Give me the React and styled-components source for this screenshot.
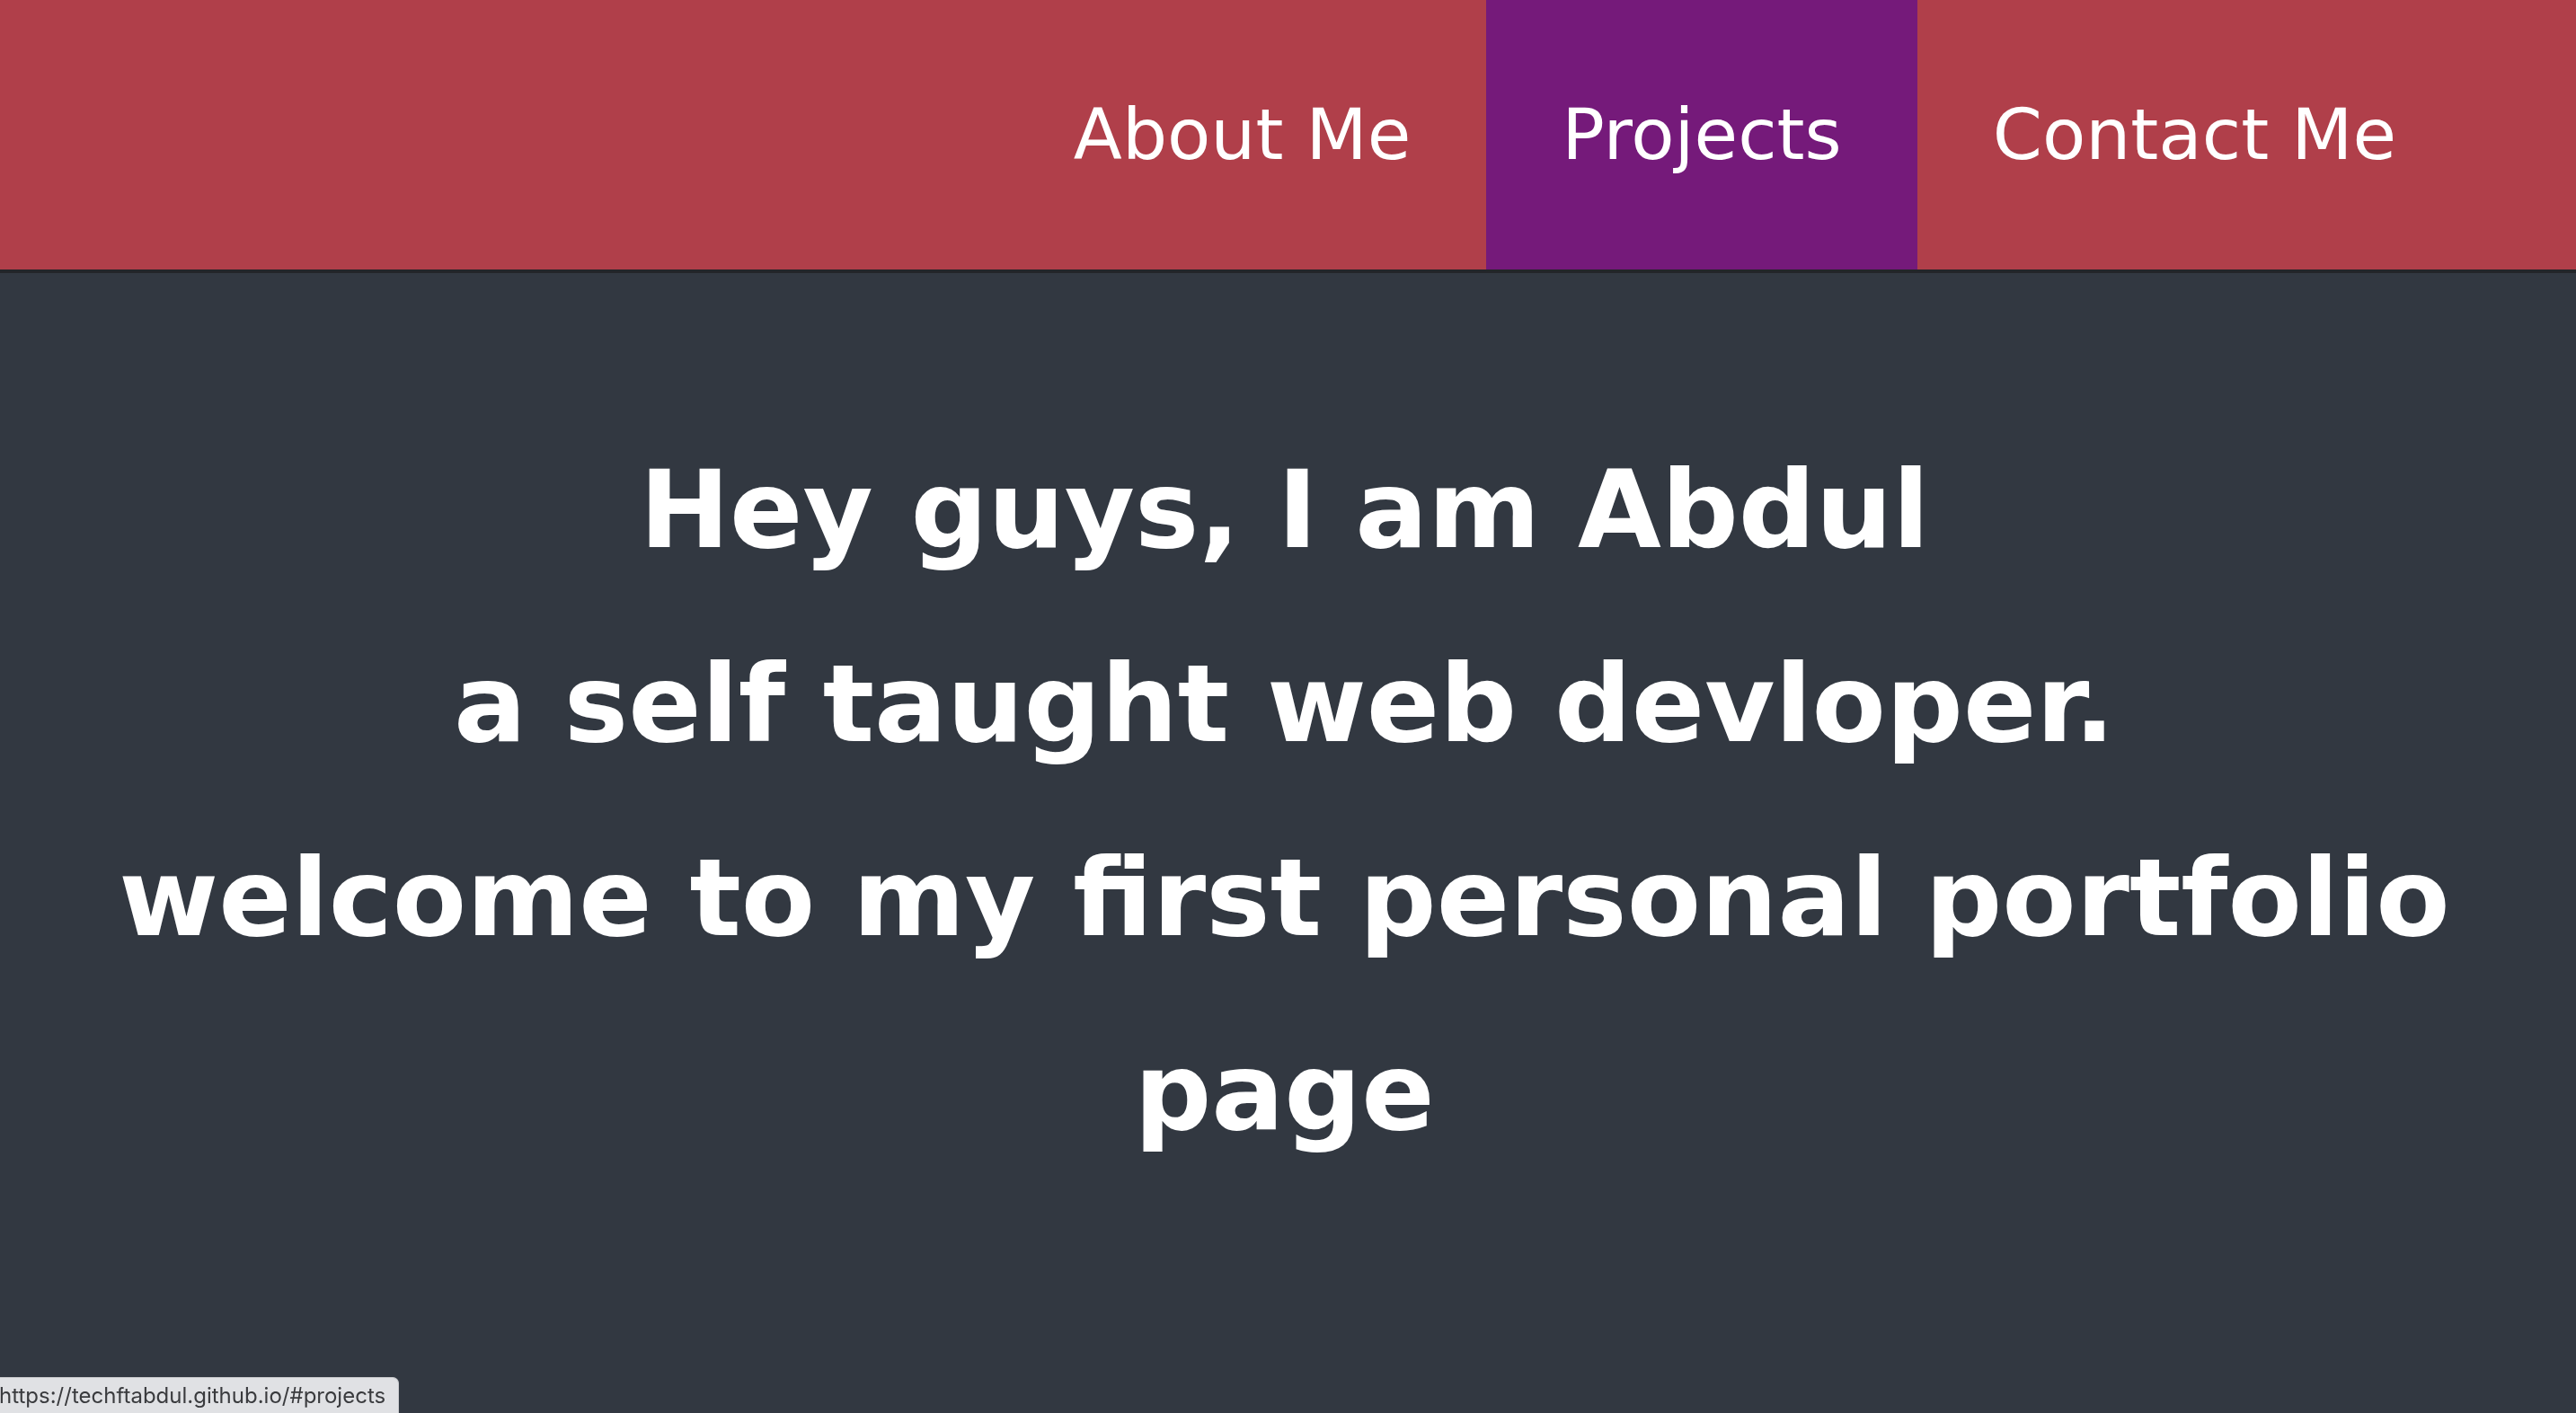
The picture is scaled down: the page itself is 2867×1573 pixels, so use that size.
import styled, { createGlobalStyle } from 'styled-components';

const GlobalStyle = createGlobalStyle`
  html, body {
    margin: 0;
    padding: 0;
    background-color: #323841;
    font-family: "DejaVu Sans", Verdana, sans-serif;
  }
  * {
    box-sizing: border-box;
  }
`;

const Page = styled.div`
  min-height: 100vh;
  background-color: #323841;
`;

const Nav = styled.nav`
  height: 304px;
  background-color: #b03f4a;
  border-bottom: 4px solid #232529;
  display: flex;
  justify-content: flex-end;
  padding-right: 116px;
`;

const Menu = styled.ul`
  list-style: none;
  display: flex;
  margin: 0;
  padding: 0;
`;

const MenuItem = styled.li`
  display: flex;
`;

const MenuLink = styled.a`
  display: flex;
  align-items: center;
  height: 100%;
  padding: 0 84px;
  color: #ffffff;
  text-decoration: none;
  font-size: 79px;
  background-color: ${props => (props.$active ? '#751a7a' : 'transparent')};
`;

const Welcome = styled.section`
  padding: 156px 16px 0 8px;
  text-align: center;
`;

const Heading = styled.h1`
  margin: 0;
  color: #ffffff;
  font-size: 120px;
  font-weight: bold;
  line-height: 216px;
`;

const StatusBar = styled.div`
  position: fixed;
  left: 0;
  bottom: 0;
  height: 40px;
  padding: 0 14px 0 0;
  display: flex;
  align-items: center;
  background-color: #e0e1e4;
  border-top: 1px solid #c9cacd;
  border-right: 1px solid #c9cacd;
  border-top-right-radius: 7px;
  color: #3a3b3e;
  font-family: Inter, "Liberation Sans", sans-serif;
  font-size: 24px;
  white-space: nowrap;
`;

const StatusText = styled.span`
  margin-left: -1px;
`;

function App() {
  return (
    <Page>
      <GlobalStyle />
      <Nav>
        <Menu>
          <MenuItem><MenuLink href="#welcome-section">About Me</MenuLink></MenuItem>
          <MenuItem><MenuLink href="#projects" $active>Projects</MenuLink></MenuItem>
          <MenuItem><MenuLink href="#contact">Contact Me</MenuLink></MenuItem>
        </Menu>
      </Nav>
      <Welcome id="welcome-section">
        <Heading>
          Hey guys, I am Abdul
          <br />
          a self taught web devloper.
          <br />
          welcome to my first personal portfolio page
        </Heading>
      </Welcome>
      <StatusBar>
        <StatusText>https://techftabdul.github.io/#projects</StatusText>
      </StatusBar>
    </Page>
  );
}

export default App;
